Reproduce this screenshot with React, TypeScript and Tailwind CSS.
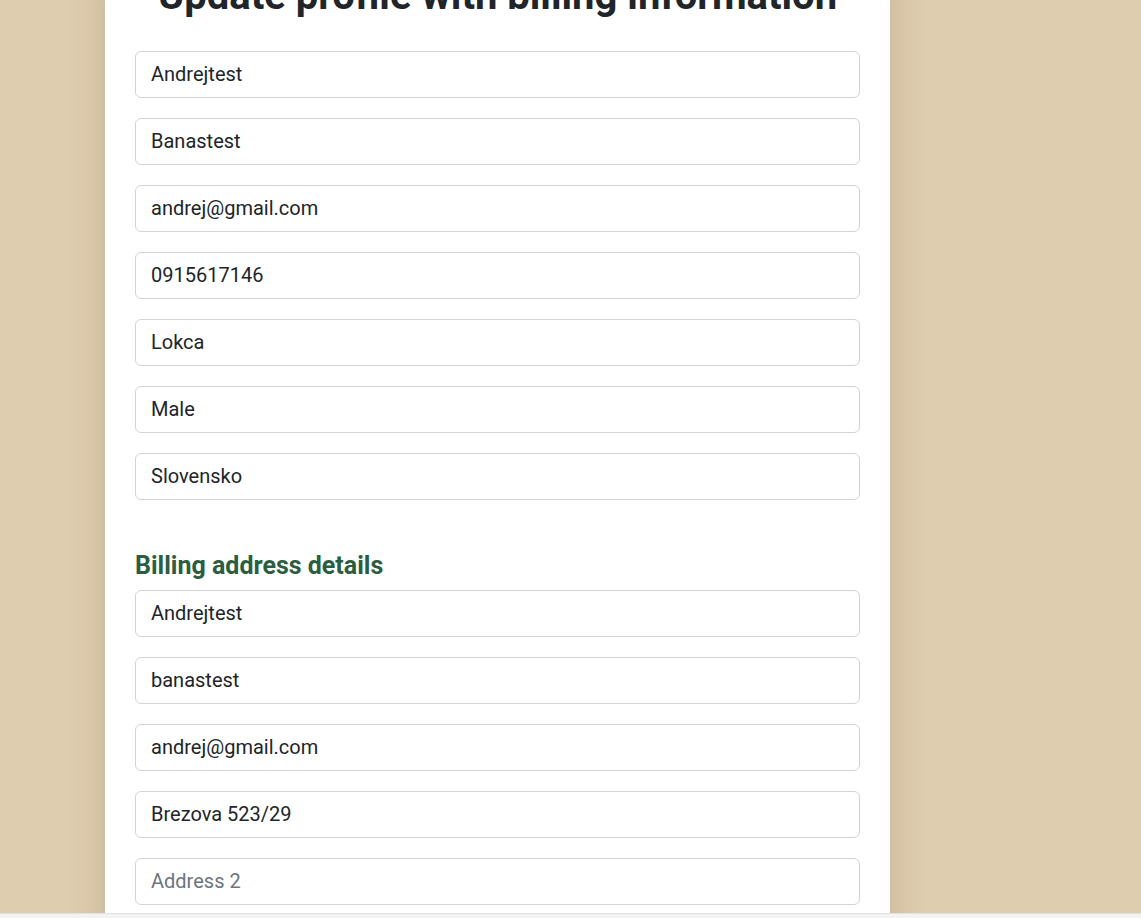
const profileFields = [
  "Andrejtest",
  "Banastest",
  "andrej@gmail.com",
  "0915617146",
  "Lokca",
  "Male",
  "Slovensko",
];

const billingFields = [
  { value: "Andrejtest", placeholder: "First name" },
  { value: "banastest", placeholder: "Last name" },
  { value: "andrej@gmail.com", placeholder: "Email" },
  { value: "Brezova 523/29", placeholder: "Address" },
  { value: "", placeholder: "Address 2" },
  { value: "", placeholder: "City" },
];

function Field({ value, placeholder }: { value: string; placeholder?: string }) {
  return (
    <input
      type="text"
      defaultValue={value}
      placeholder={placeholder}
      className="mb-5 block h-[47px] w-full rounded-[6px] border border-[#ced4da] bg-white px-[15px] pb-[2px] text-[20px] text-[#212529] outline-none placeholder:text-[#6c757d]"
    />
  );
}

export default function App() {
  return (
    <div className="flex h-[918px] flex-col overflow-hidden bg-[#dfcdb0] font-['Roboto',sans-serif]">
      <div className="h-[913px] overflow-hidden">
        <div className="ml-[105px] min-h-full w-[785px] bg-white px-[30px] shadow-[0_0_35px_rgba(60,40,10,0.16)]">
          <h1 className="-mt-[28px] mb-[31px] text-center text-[40px] font-bold leading-[1.2] text-[#212529]">
            Update profile with billing information
          </h1>
          <form>
            {profileFields.map((v, i) => (
              <Field key={i} value={v} />
            ))}
            <h2 className="mb-[9px] mt-[51px] text-[25px] font-bold leading-[1.2] text-[#2b5d41]">
              Billing address details
            </h2>
            {billingFields.map((f, i) => (
              <Field key={i} value={f.value} placeholder={f.placeholder} />
            ))}
          </form>
        </div>
      </div>
      <div className="h-[5px] border-t border-[#e2e2e2] bg-[#f3f3f3]" />
    </div>
  );
}
